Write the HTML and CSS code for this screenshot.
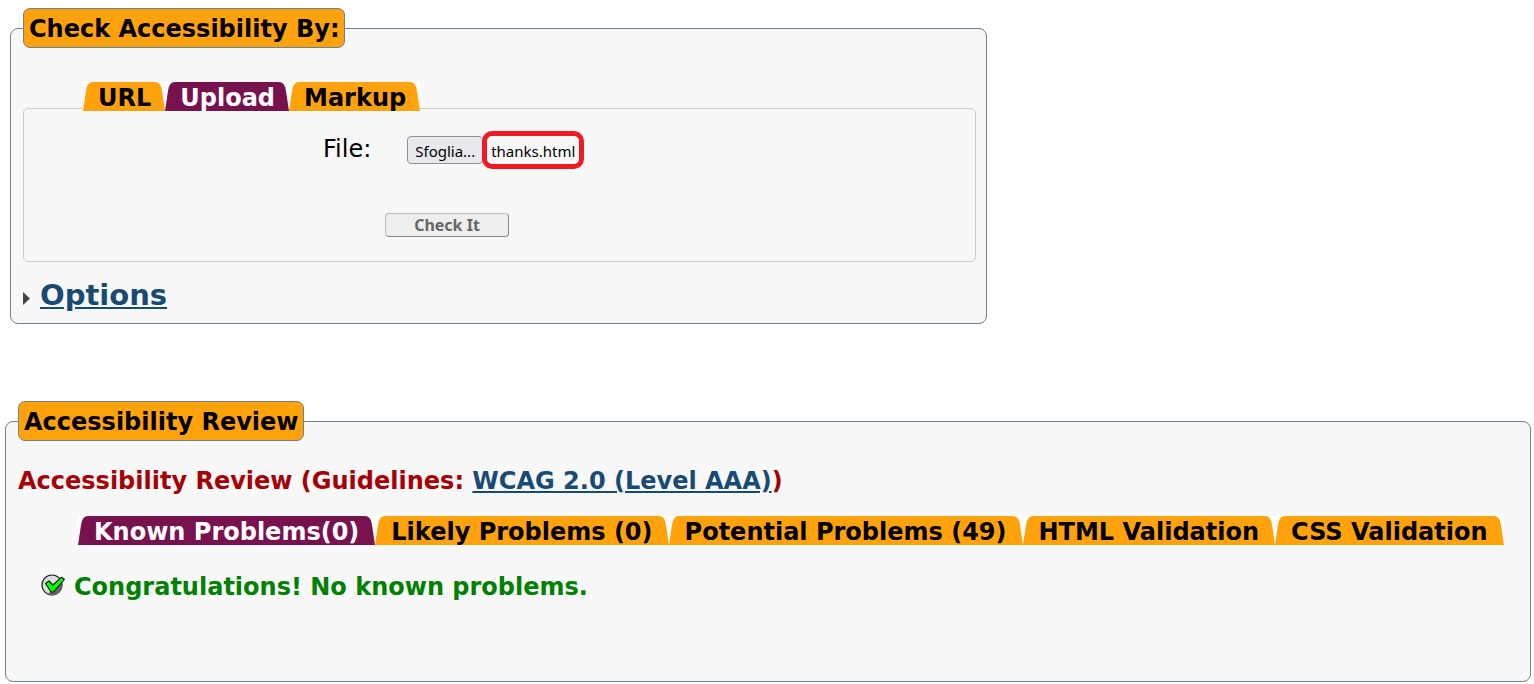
FILE: index.html
```html
<!DOCTYPE html>
<html lang="en">
<head>
<meta charset="utf-8">
<title>Accessibility Checker</title>
<link rel="stylesheet" href="styles.css">
</head>
<body>
<svg class="defs" aria-hidden="true">
  <symbol id="cap" viewBox="0 0 10 29"><path d="M0 29 L3 9 Q4 0 10 0 V29 Z"/></symbol>
</svg>
<main class="page">
  <form>
    <fieldset class="panel checker">
      <legend class="title">Check Accessibility By:</legend>
      <nav class="tabs">
        <a class="tab" href="#url"><svg class="cap"><use href="#cap"/></svg><span>URL</span><svg class="cap end"><use href="#cap"/></svg></a>
        <a class="tab active" href="#upload"><svg class="cap"><use href="#cap"/></svg><span>Upload</span><svg class="cap end"><use href="#cap"/></svg></a>
        <a class="tab" href="#markup"><svg class="cap"><use href="#cap"/></svg><span>Markup</span><svg class="cap end"><use href="#cap"/></svg></a>
      </nav>
      <div class="upload" id="upload">
        <div class="file-row">
          <label class="file-label" for="file">File:</label>
          <div class="picker">
            <input class="file-input" type="file" id="file">
            <label class="browse" for="file">Sfoglia...</label>
            <output class="file-name" for="file">thanks.html</output>
          </div>
        </div>
        <button class="check" type="button">Check It</button>
      </div>
      <h2 class="options"><svg class="arrow" viewBox="0 0 8 13" aria-hidden="true"><path d="M0 0 L7 6.5 L0 13 Z"/></svg><a href="#options">Options</a></h2>
    </fieldset>
  </form>

  <fieldset class="panel review">
    <legend class="title">Accessibility Review</legend>
    <h3 class="heading">Accessibility Review (Guidelines: <a href="#wcag">WCAG 2.0 (Level AAA)</a>)</h3>
    <nav class="tabs wide">
      <a class="tab active" href="#known"><svg class="cap"><use href="#cap"/></svg><span>Known Problems(0)</span><svg class="cap end"><use href="#cap"/></svg></a>
      <a class="tab" href="#likely"><svg class="cap"><use href="#cap"/></svg><span>Likely Problems (0)</span><svg class="cap end"><use href="#cap"/></svg></a>
      <a class="tab" href="#potential"><svg class="cap"><use href="#cap"/></svg><span>Potential Problems (49)</span><svg class="cap end"><use href="#cap"/></svg></a>
      <a class="tab" href="#html"><svg class="cap"><use href="#cap"/></svg><span>HTML Validation</span><svg class="cap end"><use href="#cap"/></svg></a>
      <a class="tab" href="#css"><svg class="cap"><use href="#cap"/></svg><span>CSS Validation</span><svg class="cap end"><use href="#cap"/></svg></a>
    </nav>
    <p class="result" id="known">
      <svg class="ok" viewBox="0 0 24 22" aria-hidden="true">
        <circle cx="11" cy="11" r="10" fill="#ddd" stroke="#222" stroke-width="1.2"/>
        <path d="M21 8 A10 10 0 0 1 7 20 L12 15 Z" fill="#666"/>
        <path d="M4.5 9.5 L8 7 L12 11 L20.5 3.2 L23.4 5.5 L12.5 18 L10 18 Z" fill="#0f0" stroke="#111" stroke-width="1.1" stroke-linejoin="round"/>
      </svg>
      Congratulations! No known problems.
    </p>
  </fieldset>
</main>
</body>
</html>
```
FILE: styles.css
```css
* { box-sizing: border-box; }

body {
  margin: 0;
  background: #fff;
  color: #000;
  font-family: Verdana, "DejaVu Sans", sans-serif;
  font-size: 24px;
  line-height: 28px;
}

a { color: #184a74; }

.defs { position: absolute; width: 0; height: 0; }

.page { padding: 8px 3px 2px 5px; }

.panel {
  min-width: 0;
  margin: 0;
  padding: 0 12px;
  border: 1px solid #708090;
  border-radius: 8px;
  background: #f8f8f8;
}

.title {
  padding: 6px 4px 4px 5px;
  border: 1px solid #708090;
  border-radius: 7px;
  background: #ffa20c;
  font-weight: bold;
}

.checker {
  width: 64%;
  margin: 0 5px 77px;
  padding: 34px 10px 11px 12px;
}

.tabs {
  position: relative;
  display: flex;
  margin-left: 60px;
}

.tab {
  display: flex;
  height: 29px;
  overflow: hidden;
  background: #fff;
  color: #000;
  font-weight: bold;
  line-height: 32px;
  text-decoration: none;
  white-space: nowrap;
}

.tab span { padding: 0 4px 0 5px; background: #ffa20c; }
.wide .tab span { padding: 0 6px; }
.cap { width: 10px; height: 29px; fill: #ffa20c; }
.cap.end { transform: scaleX(-1); }
.tab.active { color: #fff; }
.tab.active span { background: #78124f; }
.tab.active .cap { fill: #78124f; }

.upload {
  margin-top: -3px;
  padding: 22px 0 24px;
  border: 1px solid #ccc;
  border-radius: 5px;
}

.file-row {
  display: flex;
  align-items: center;
  gap: 36px;
  margin-left: 299px;
}

.file-label { padding-bottom: 2px; }

.picker {
  display: flex;
  align-items: center;
  font-family: "Noto Sans", sans-serif;
  font-size: 15px;
}

.file-input { position: absolute; opacity: 0; width: 1px; height: 1px; }

.browse {
  height: 28px;
  padding: 0 7px;
  border: 1px solid #8f8f9d;
  border-radius: 4px;
  background: #e9e9ed;
  line-height: 28px;
}

.file-name {
  height: 38px;
  margin-left: -1px;
  padding: 0 4px;
  border: 5px solid #ed1c24;
  border-radius: 10px;
  line-height: 30px;
}

.check {
  display: block;
  width: 124px;
  height: 24px;
  margin: 44px 0 0 361px;
  padding: 0;
  border: 1px solid #999;
  border-color: #bbb #888 #888 #bbb;
  border-radius: 4px;
  background: #eee;
  color: #666;
  font-family: "Noto Sans", sans-serif;
  font-size: 16px;
  font-weight: bold;
  line-height: 22px;
}

.options {
  display: flex;
  align-items: center;
  gap: 9px;
  margin: 16px 0 0;
  font-size: 29px;
  line-height: 34px;
}

.arrow { width: 8px; height: 13px; margin-top: 7px; fill: #444; }

.review { min-height: 281px; }

.heading {
  margin: 26px 0 21px;
  color: #a50005;
  font-size: 24px;
}

.result {
  display: flex;
  align-items: center;
  gap: 9px;
  margin: 28px 0 0 23px;
  color: #008000;
  font-weight: bold;
}

.ok { width: 24px; height: 22px; margin-bottom: 4px; }
```
